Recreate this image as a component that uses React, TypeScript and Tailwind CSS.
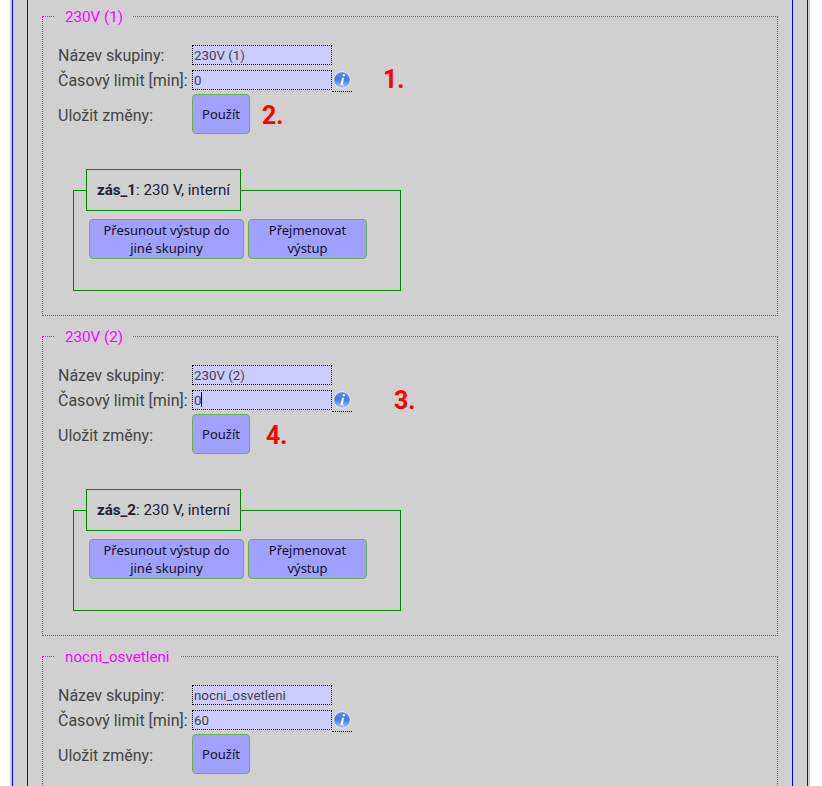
const font = "font-['Roboto',sans-serif]";

function InfoIcon() {
  return (
    <svg width="18" height="18" viewBox="0 0 18 18" className="block">
      <defs>
        <linearGradient id="ball" x1="0" y1="0" x2="0" y2="1">
          <stop offset="0%" stopColor="#5b8ce4" />
          <stop offset="50%" stopColor="#3f7de6" />
          <stop offset="100%" stopColor="#a9cdf9" />
        </linearGradient>
      </defs>
      <circle cx="9" cy="9" r="9" fill="#dbe4f3" />
      <circle cx="9" cy="9" r="7.8" fill="url(#ball)" />
      <path d="M9.9 3.2h2.1l-.4 2.1H9.5zM9 6.8h2.1l-1.2 6.1c0 .3.2.4.7.3l-.2 1.1H8.2c-.5 0-.8-.4-.7-.9z" fill="#fff" />
    </svg>
  );
}

function Group({ name, outlet, limit, n1, n2, last, caret }: { name: string; outlet?: string; limit: string; n1?: React.ReactNode; n2?: React.ReactNode; last?: boolean; caret?: boolean }) {
  return (
    <fieldset className={`w-[736px] border border-dotted border-[#ff00ff] px-[15px] ${last ? "h-[160px]" : "h-[310px] mb-[10px]"}`}>
      <legend className="ml-[-3px] px-[10px] pt-px text-[15.2px] leading-[20px] text-[#f0f]">{name}</legend>
      <div className="mt-[18px] flex items-center h-[20px]">
        <label className="w-[134px] shrink-0 translate-y-px text-base leading-[20px] text-[#444]">Název skupiny:</label>
        <input readOnly value={name} className="w-[140px] h-[20px] border border-dotted border-black bg-[#ccf] px-[1px] text-[13.33px] text-[#444] outline-none" />
      </div>
      <div className="mt-[5px] flex items-center h-[20px]">
        <label className="w-[134px] shrink-0 translate-y-px text-base leading-[20px] text-[#444] whitespace-nowrap">Časový limit [min]:</label>
        <div className="relative">
          <input readOnly value={limit} className="block w-[140px] h-[20px] border border-dotted border-black bg-[#ccf] px-[1px] text-[13.33px] text-[#444] outline-none" />
          {caret && <span className="absolute left-[9px] top-[2px] h-[15px] w-px bg-black" />}
        </div>
        <span className="block w-[20px] h-[21px] border-b border-dotted border-black pl-px translate-y-[1px]"><InfoIcon /></span>
        {n1}
      </div>
      <div className="mt-[4px] flex items-center h-[40px]">
        <label className="w-[134px] shrink-0 pt-[3px] text-base leading-[20px] text-[#444]">Uložit změny:</label>
        <button className="w-[58px] h-[40px] rounded-[4px] border border-[#70ad47] bg-[#a0a0ff] pt-px text-[13px] text-[#112] font-['Noto_Sans',sans-serif]">Použít</button>
        {n2}
      </div>
      {outlet && (
        <div className="relative mt-[56px] ml-[15px] w-[328px] h-[101px] border border-[#080]">
          <div className="absolute left-[12px] top-[-22px] w-[155px] h-[42px] border border-[#080] bg-[#d0d0d0] flex items-center justify-center pt-px text-[15.2px] text-[#223] whitespace-nowrap">
            <span><b className="font-bold">{outlet}</b>: 230 V, interní</span>
          </div>
          <div className="mt-[28px] ml-[15px] flex gap-[4px] font-['Noto_Sans',sans-serif] text-[13px] leading-[18px] text-[#112]">
            <button className="w-[155px] h-[40px] rounded-[4px] border border-[#70ad47] bg-[#a0a0ff] px-[12px]">Přesunout výstup do jiné skupiny</button>
            <button className="w-[119px] h-[40px] rounded-[4px] border border-[#70ad47] bg-[#a0a0ff] px-[15px]">Přejmenovat výstup</button>
          </div>
        </div>
      )}
    </fieldset>
  );
}

const num = "text-[25px] leading-[20px] font-bold text-[#f00]";

export default function App() {
  return (
    <div className={`${font} w-[822px] h-[786px] overflow-hidden bg-white pl-[10px]`}>
      <div className="w-[800px] h-[786px] bg-[#d0d0d0] pl-[2px]">
        <div className="w-[796px] h-[786px] border-x border-[#00f] px-[14px]">
          <div className="w-[766px] h-[786px] border-x border-[#00f] px-[14px] pt-[6px]">
            <Group name="230V (1)" outlet="zás_1" limit="0"
              n1={<b className={`ml-[31px] ${num}`}>1.</b>}
              n2={<b className={`ml-[12px] translate-y-[2px] ${num}`}>2.</b>} />
            <Group name="230V (2)" outlet="zás_2" limit="0" caret
              n1={<b className={`ml-[42px] translate-y-[1px] ${num}`}>3.</b>}
              n2={<b className={`ml-[16px] translate-y-[2px] ${num}`}>4.</b>} />
            <Group name="nocni_osvetleni" limit="60" last />
          </div>
        </div>
      </div>
    </div>
  );
}
